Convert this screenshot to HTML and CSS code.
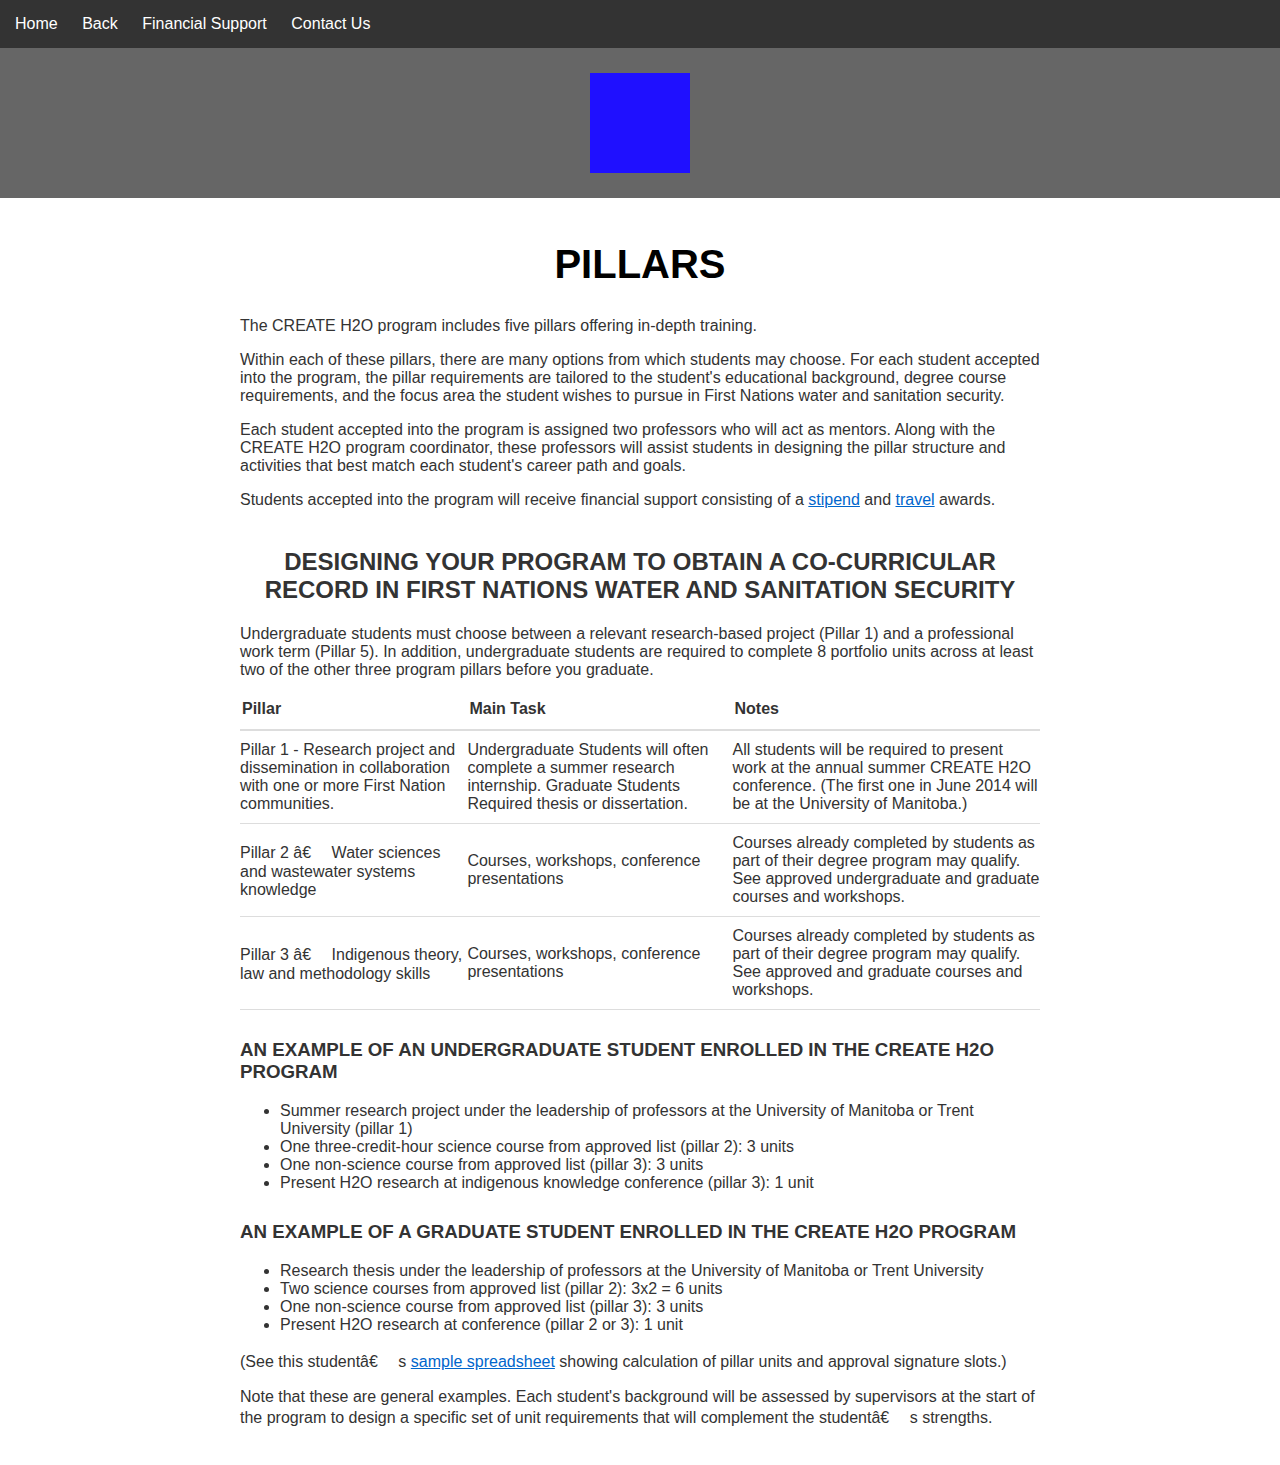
FILE: index.html
```html
<!DOCTYPE html>
<html lang="en">
<head>
<meta charset="utf-8">
<title>Pillars</title>
<link rel="stylesheet" href="styles.css">
</head>
<body>
<nav class="topnav">
  <a href="#">Home</a>
  <a href="#">Back</a>
  <a href="#">Financial Support</a>
  <a href="#">Contact Us</a>
</nav>
<header class="banner">
  <div class="logo"></div>
</header>
<main class="content">
  <h1 class="title">PILLARS</h1>
  <p>The CREATE H2O program includes five pillars offering in-depth training.</p>
  <p>Within each of these pillars, there are many options from which students may choose. For each student accepted into the program, the pillar requirements are tailored to the student's educational background, degree course requirements, and the focus area the student wishes to pursue in First Nations water and sanitation security.</p>
  <p>Each student accepted into the program is assigned two professors who will act as mentors. Along with the CREATE H2O program coordinator, these professors will assist students in designing the pillar structure and activities that best match each student's career path and goals.</p>
  <p>Students accepted into the program will receive financial support consisting of a <a href="#">stipend</a> and <a href="#">travel</a> awards.</p>

  <h2 class="section-title">DESIGNING YOUR PROGRAM TO OBTAIN A CO-CURRICULAR RECORD IN FIRST NATIONS WATER AND SANITATION SECURITY</h2>
  <p>Undergraduate students must choose between a relevant research-based project (Pillar 1) and a professional work term (Pillar 5). In addition, undergraduate students are required to complete 8 portfolio units across at least two of the other three program pillars before you graduate.</p>

  <table class="pillars">
    <thead>
      <tr>
        <th class="c1">Pillar</th>
        <th class="c2">Main Task</th>
        <th class="c3">Notes</th>
      </tr>
    </thead>
    <tbody>
      <tr>
        <td>Pillar 1 - Research project and dissemination in collaboration with one or more First Nation communities.</td>
        <td>Undergraduate Students will often complete a summer research internship. Graduate Students Required thesis or dissertation.</td>
        <td>All students will be required to present work at the annual summer CREATE H2O conference. (The first one in June 2014 will be at the University of Manitoba.)</td>
      </tr>
      <tr>
        <td>Pillar 2 â€<span class="moji">&#8195;</span> Water sciences and wastewater systems knowledge</td>
        <td>Courses, workshops, conference presentations</td>
        <td>Courses already completed by students as part of their degree program may qualify. See approved undergraduate and graduate courses and workshops.</td>
      </tr>
      <tr>
        <td>Pillar 3 â€<span class="moji">&#8195;</span> Indigenous theory, law and methodology skills</td>
        <td>Courses, workshops, conference presentations</td>
        <td>Courses already completed by students as part of their degree program may qualify. See approved and graduate courses and workshops.</td>
      </tr>
    </tbody>
  </table>

  <h3 class="example-title">AN EXAMPLE OF AN UNDERGRADUATE STUDENT ENROLLED IN THE CREATE H2O PROGRAM</h3>
  <ul>
    <li>Summer research project under the leadership of professors at the University of Manitoba or Trent University (pillar 1)</li>
    <li>One three-credit-hour science course from approved list (pillar 2): 3 units</li>
    <li>One non-science course from approved list (pillar 3): 3 units</li>
    <li>Present H2O research at indigenous knowledge conference (pillar 3): 1 unit</li>
  </ul>

  <h3 class="example-title">AN EXAMPLE OF A GRADUATE STUDENT ENROLLED IN THE CREATE H2O PROGRAM</h3>
  <ul>
    <li>Research thesis under the leadership of professors at the University of Manitoba or Trent University</li>
    <li>Two science courses from approved list (pillar 2): 3x2 = 6 units</li>
    <li>One non-science course from approved list (pillar 3): 3 units</li>
    <li>Present H2O research at conference (pillar 2 or 3): 1 unit</li>
  </ul>
  <p>(See this studentâ€<span class="moji">&#8195;</span> s <a href="#">sample spreadsheet</a> showing calculation of pillar units and approval signature slots.)</p>
  <p>Note that these are general examples. Each student's background will be assessed by supervisors at the start of the program to design a specific set of unit requirements that will complement the studentâ€<span class="moji">&#8195;</span> s strengths.</p>
</main>
</body>
</html>
```

FILE: styles.css
```css
html, body {
  margin: 0;
  padding: 0;
}

body {
  font-family: "Liberation Sans", Arial, Helvetica, sans-serif;
  font-size: 16px;
  color: #333;
  background: #fff;
}

.topnav {
  background: #333;
  height: 48px;
  display: flex;
  align-items: center;
  padding: 0 15px;
  gap: 24.5px;
}

.topnav a {
  color: #fff;
  text-decoration: none;
  font-size: 16px;
}

.banner {
  background: #666;
  height: 150px;
  display: flex;
  justify-content: center;
  align-items: center;
}

.logo {
  width: 100px;
  height: 100px;
  background: #1f10ff;
}

.content {
  width: 800px;
  margin: 0 auto;
  padding: 24px 0 40px;
}

.title {
  text-align: center;
  font-size: 40px;
  color: #000;
  margin: 20px 0 30px;
}

p {
  margin: 16px 0;
}

a {
  color: #0066cc;
}

.moji {
  font-family: "Noto Sans", sans-serif;
}

.section-title {
  text-align: center;
  font-size: 24px;
  line-height: 28px;
  margin: 39px 20px 21px;
}

.pillars {
  width: 100%;
  border-collapse: collapse;
  margin: 16px 0 0;
}

.pillars th {
  text-align: left;
  font-weight: bold;
  padding: 5px 0 11px 2px;
  border-bottom: 2px solid #ddd;
}

.pillars td {
  padding: 10px 0;
  vertical-align: middle;
  border-bottom: 1px solid #ddd;
}

.pillars .c1 { width: 227px; }
.pillars .c2 { width: 265px; }
.pillars .c3 { width: 308px; }

.example-title {
  font-size: 18.72px;
  margin: 29px 0 19px;
}

ul {
  margin: 16px 0;
  padding-left: 40px;
}
```
